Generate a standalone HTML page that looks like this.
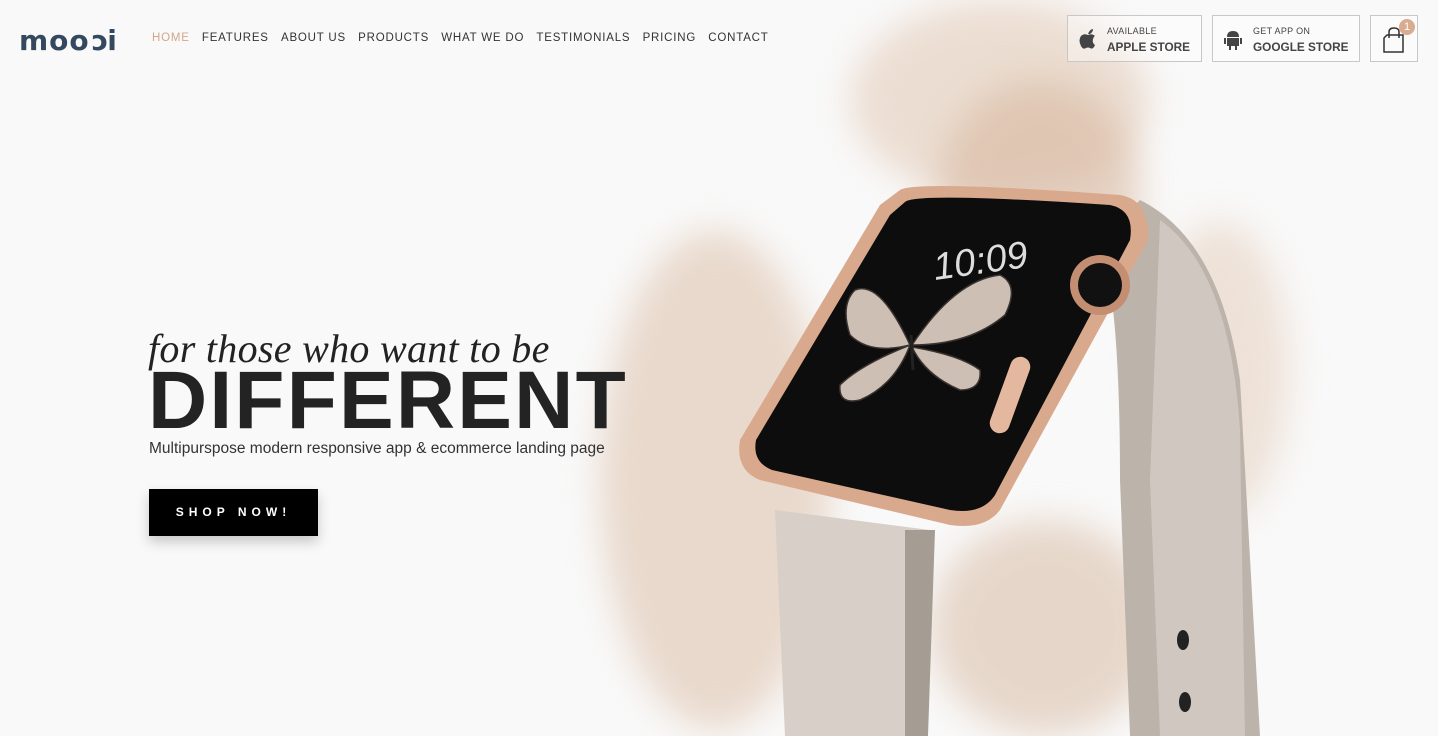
<!DOCTYPE html>
<html><head><meta charset="utf-8"><style>
*{margin:0;padding:0;box-sizing:border-box}
body{width:1438px;height:736px;overflow:hidden;background:#f9f9f9;font-family:"Liberation Sans",sans-serif;position:relative}
.splash{position:absolute;border-radius:50%;filter:blur(18px)}
.logo{position:absolute;left:19px;top:24px;font-size:28px;font-weight:bold;color:#34495e;letter-spacing:1px;font-family:"DejaVu Sans",sans-serif}
nav{position:absolute;left:152px;top:32px;font-size:11.5px;letter-spacing:.8px;color:#333;white-space:nowrap}
nav span{margin-right:12.2px}
.btn{position:absolute;top:15px;height:47px;border:1px solid #c8c8c8;background:rgba(255,255,255,.4);color:#444}
.btn small{position:absolute;top:10px;font-size:9px;letter-spacing:.3px}
.btn b{position:absolute;top:24px;font-size:11.8px;letter-spacing:0}
h2{position:absolute;left:148px;top:325px;font-family:"Liberation Serif",serif;font-style:italic;font-weight:normal;font-size:40px;color:#222;letter-spacing:.3px}
h1{position:absolute;left:148px;top:354px;font-size:82px;font-weight:900;color:#232323;letter-spacing:2.2px}
p{position:absolute;left:149px;top:440px;font-size:15.5px;color:#333}
.shop{position:absolute;left:149px;top:489px;width:169px;height:47px;background:#000;color:#fff;font-size:12px;font-weight:bold;letter-spacing:5px;text-align:center;line-height:47px;box-shadow:0 6px 12px rgba(0,0,0,.2)}
</style></head><body>
<div class="splash" style="left:850px;top:0;width:300px;height:200px;background:#e3cbb8;opacity:.6"></div>
<div class="splash" style="left:940px;top:80px;width:200px;height:220px;background:#d8b8a0;opacity:.6"></div>
<div class="splash" style="left:600px;top:230px;width:230px;height:500px;background:#dcbfa8;opacity:.55"></div>
<div class="splash" style="left:930px;top:520px;width:230px;height:216px;background:#d8bba4;opacity:.55"></div>
<div class="splash" style="left:1150px;top:220px;width:140px;height:300px;background:#e3cbb8;opacity:.5"></div>
<svg style="position:absolute;left:700px;top:180px" width="600" height="556">
<path d="M440 20 Q520 60 540 200 L560 556 L430 556 L420 300 Q420 120 400 60Z" fill="#bcb3ab"/>
<path d="M460 40 Q530 90 540 250 L545 556 L460 556 L450 300Z" fill="#cfc7c0"/>
<path d="M75 330 L230 350 L220 556 L85 556Z" fill="#d7cfc8"/>
<path d="M205 350 L235 350 L228 556 L205 556Z" fill="#a59c94"/>
<ellipse cx="483" cy="460" rx="6" ry="10" fill="#222"/><ellipse cx="485" cy="522" rx="6" ry="10" fill="#222"/>
<path d="M200 10 Q215 0 420 15 Q450 20 448 60 L300 330 Q285 350 250 345 L60 300 Q35 290 40 260 L180 25Z" fill="#d9a98e"/>
<path d="M205 22 Q215 12 410 25 Q435 30 430 60 L295 315 Q282 335 250 330 L72 290 Q52 282 56 260 L190 35Z" fill="#0d0d0d"/>
<circle cx="400" cy="105" r="30" fill="#c48e73"/><circle cx="400" cy="105" r="22" fill="#111"/>
<rect x="300" y="175" width="20" height="80" rx="10" transform="rotate(20 310 215)" fill="#e3b89e"/>
<text x="235" y="100" font-family="Liberation Sans" font-size="38" fill="#ddd" font-style="italic" transform="rotate(-8 235 100)">10:09</text>
<g transform="translate(0 15)">
<g fill="#cdbfb4" stroke="#3a3330" stroke-width="1.5">
<path d="M210 150 Q180 85 155 95 Q140 110 150 140 Q170 160 210 150Z"/>
<path d="M210 150 Q160 170 140 190 Q138 210 160 205 Q195 190 210 150Z"/>
<path d="M212 150 Q255 85 300 80 Q320 90 305 120 Q270 150 212 150Z"/>
<path d="M212 152 Q260 160 280 175 Q282 195 260 195 Q225 180 212 152Z"/>
</g>
<path d="M211 140 L213 175" stroke="#222" stroke-width="3"/>
</g>
</svg>
<div class="logo">moo<span style="display:inline-block;transform:scaleX(-1)">c</span>i</div>
<nav><span style="color:#d4a68a">HOME</span><span>FEATURES</span><span>ABOUT US</span><span>PRODUCTS</span><span>WHAT WE DO</span><span>TESTIMONIALS</span><span>PRICING</span><span>CONTACT</span></nav>
<div class="btn" style="left:1067px;width:135px"><svg style="position:absolute;left:10px;top:12px" width="20" height="22" viewBox="0 0 20 22"><path d="M10 6 Q12 1 15 1 Q15 4 12 6Z M10 7 Q6 5 3 8 Q0 12 3 18 Q5 22 8 20 Q10 19 12 20 Q15 22 17 17 Q14 15 15 11 Q16 8 17 8 Q14 5 10 7Z" fill="#444"/></svg><small style="left:39px">AVAILABLE</small><b style="left:39px">APPLE STORE</b></div>
<div class="btn" style="left:1212px;width:148px"><svg style="position:absolute;left:10px;top:13px" width="20" height="22" viewBox="0 0 20 22"><path d="M4 8 Q4 2 10 2 Q16 2 16 8Z M4 9 H16 V17 H4Z M1 9 H3 V15 H1Z M17 9 H19 V15 H17Z M6 17 H8 V21 H6Z M12 17 H14 V21 H12Z" fill="#444"/></svg><small style="left:40px">GET APP ON</small><b style="left:40px">GOOGLE STORE</b></div>
<div class="btn" style="left:1370px;width:48px"><svg style="position:absolute;left:10px;top:10px" width="28" height="28" viewBox="0 0 28 28"><path d="M3 12 L6 9 H22 V26 H3Z M8 12 V6 Q8 2 13 2 Q18 2 18 6 V12" fill="none" stroke="#333" stroke-width="1.5"/></svg><div style="position:absolute;left:28px;top:3px;width:16px;height:16px;border-radius:50%;background:#d9ab90;color:#fff;font-size:11px;text-align:center;line-height:16px">1</div></div>
<h2>for those who want to be</h2>
<h1>DIFFERENT</h1>
<p>Multipurspose modern responsive app &amp; ecommerce landing page</p>
<div class="shop">SHOP NOW!</div>
</body></html>
